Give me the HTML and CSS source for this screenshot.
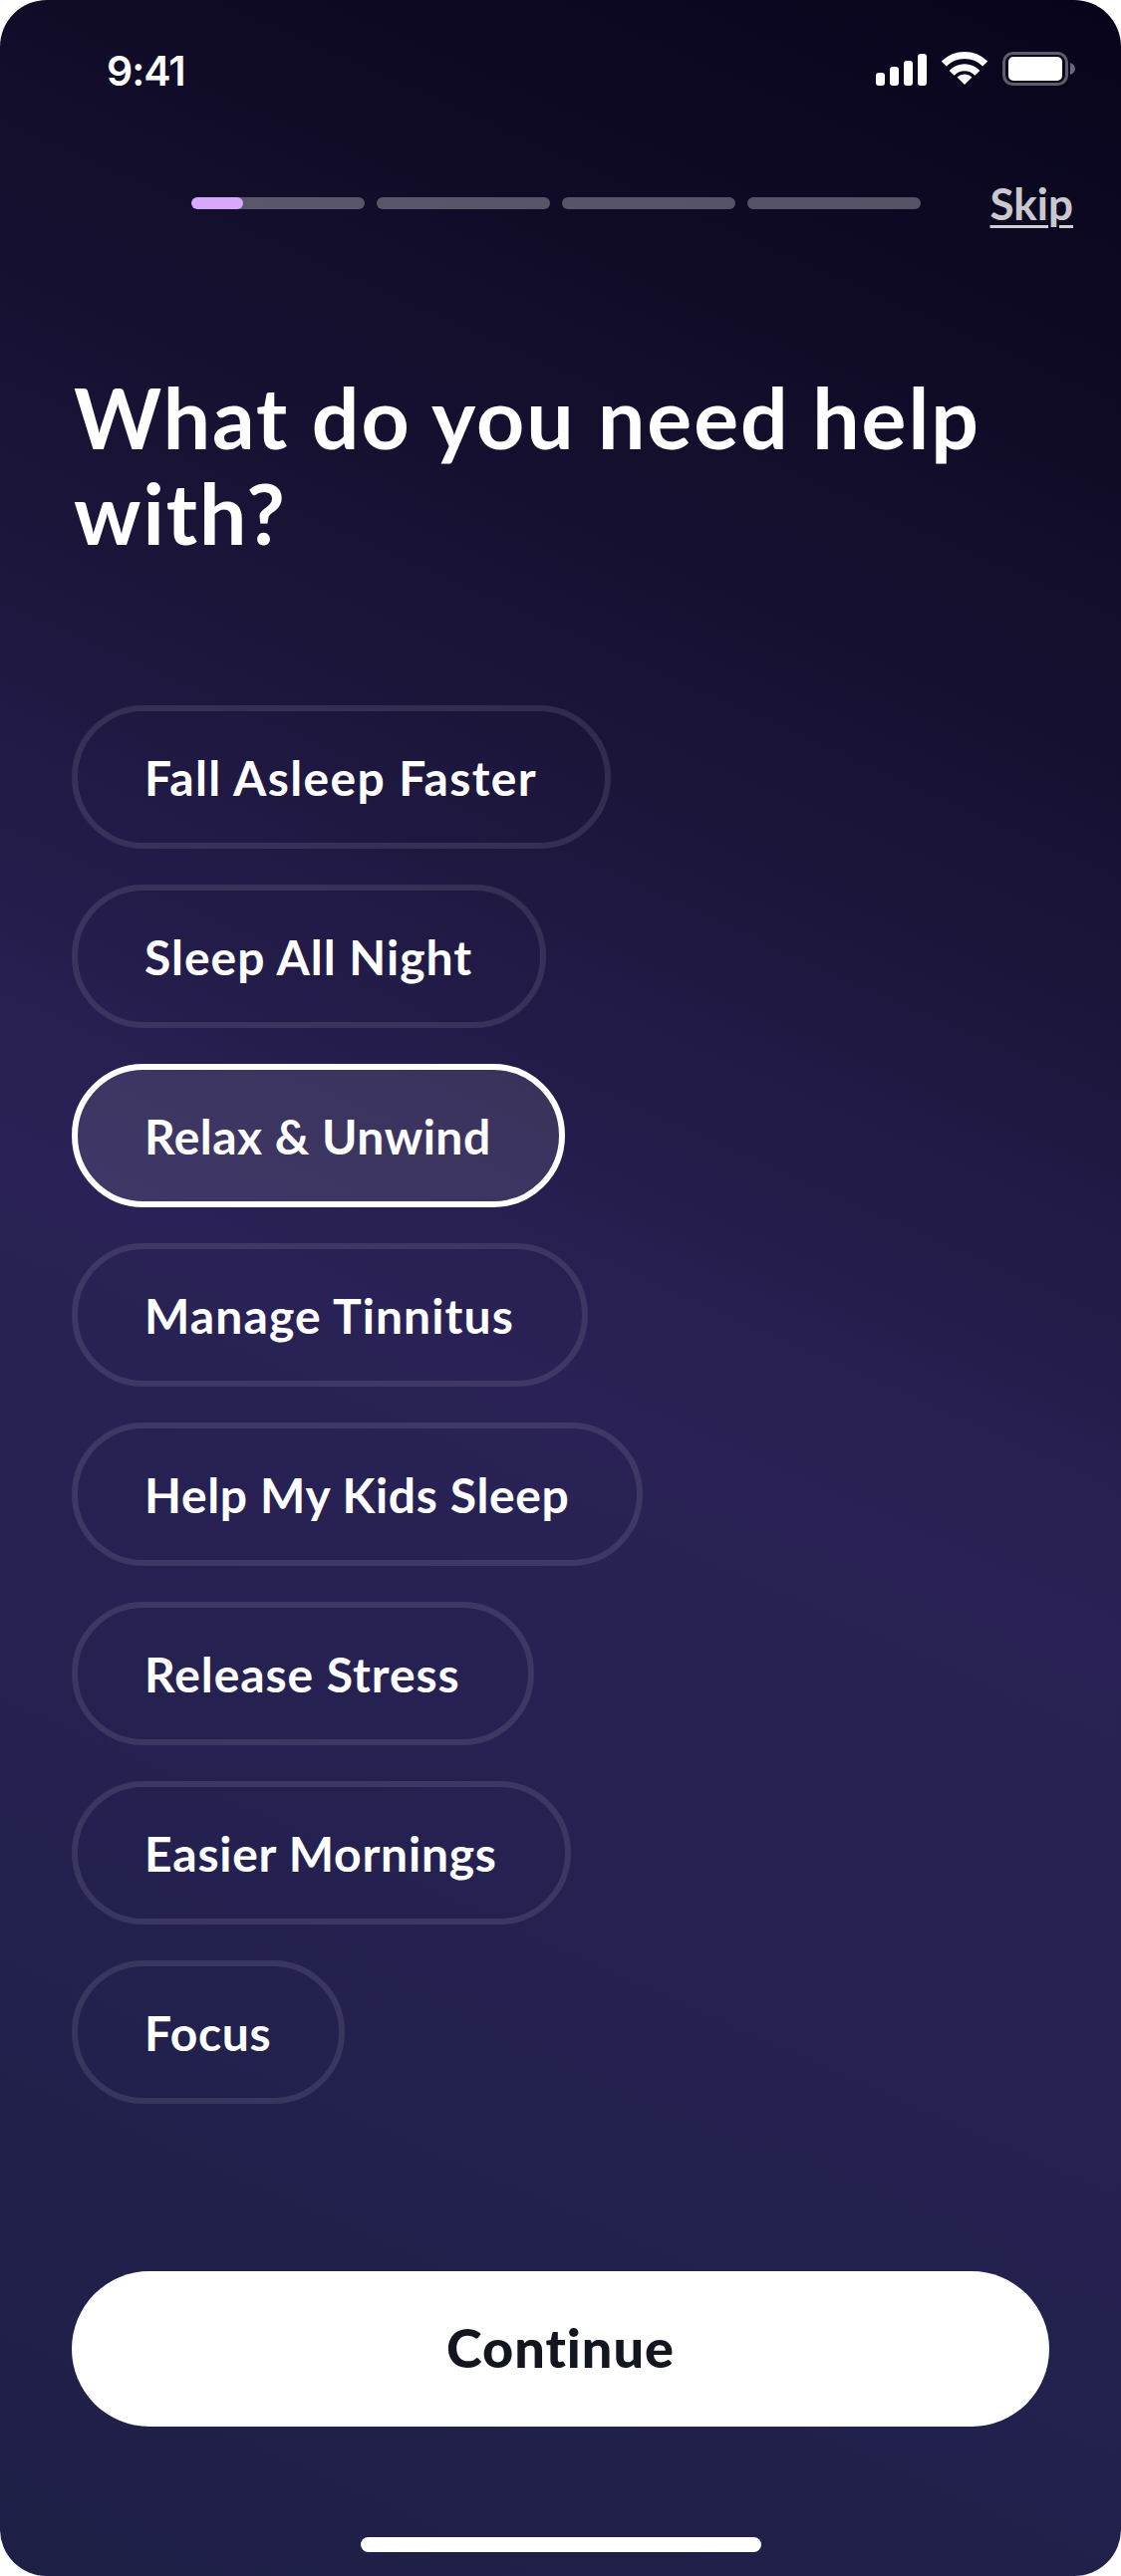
FILE: index.html
```
<!DOCTYPE html>
<html lang="en">
<head>
<meta charset="utf-8">
<title>What do you need help with?</title>
<link rel="stylesheet" href="styles.css">
</head>
<body>
<main class="screen">
  <header class="status-bar">
    <span class="time">9:41</span>
    <div class="status-icons">
      <svg class="signal" width="51" height="32" viewBox="0 0 51 32"><rect x="0" y="19" width="9" height="13" rx="3"/><rect x="14" y="13" width="9" height="19" rx="3"/><rect x="28" y="7" width="9" height="25" rx="3"/><rect x="42" y="0" width="9" height="32" rx="3"/></svg>
      <svg class="wifi" width="46" height="33" viewBox="0 0 46 33"><path class="wifi-arc" d="M2.3 12 A29.5 29.5 0 0 1 43.7 12"/><path class="wifi-arc" d="M10.2 21.4 A17.5 17.5 0 0 1 35.8 21.4"/><path d="M23 33 L15.5 25.5 A11 11 0 0 1 30.5 25.5 Z"/></svg>
      <svg class="battery" width="73" height="34" viewBox="0 0 73 34"><rect class="battery-case" x="1.5" y="1.5" width="63" height="31" rx="9"/><rect x="6" y="5" width="54" height="24" rx="5"/><path class="battery-nub" d="M68 11 C71 12 73 14 73 17 C73 20 71 22 68 23 Z"/></svg>
    </div>
  </header>

  <nav class="progress-row">
    <div class="progress">
      <div class="segment"><div class="segment-fill"></div></div>
      <div class="segment"></div>
      <div class="segment"></div>
      <div class="segment"></div>
    </div>
    <a class="skip">Skip</a>
  </nav>

  <h1 class="title">What do you need help with?</h1>

  <ul class="options">
    <li class="pill">Fall Asleep Faster</li>
    <li class="pill">Sleep All Night</li>
    <li class="pill pill-selected">Relax &amp; Unwind</li>
    <li class="pill">Manage Tinnitus</li>
    <li class="pill">Help My Kids Sleep</li>
    <li class="pill">Release Stress</li>
    <li class="pill">Easier Mornings</li>
    <li class="pill">Focus</li>
  </ul>

  <button class="continue">Continue</button>
  <div class="home-indicator"></div>
</main>
</body>
</html>
```
FILE: styles.css
```
* { box-sizing: border-box; }
html, body { margin: 0; padding: 0; background: #fff; }
body { width: 1125px; height: 2586px; overflow: hidden; }

.screen {
  width: 1125px;
  height: 2586px;
  border-radius: 47px;
  overflow: hidden;
  display: flex;
  flex-direction: column;
  color: #fff;
  font-family: "Lato", "Liberation Sans", sans-serif;
  font-variant-ligatures: none;
  background: linear-gradient(204deg, #07041b 0%, #15102f 24%, #2a2256 53%, #242150 72%, #1e1f45 100%);
}

.status-bar {
  height: 36px;
  margin-top: 52px;
  padding: 0 46px 0 107px;
  display: flex;
  justify-content: space-between;
  align-items: flex-start;
}
.time {
  font-family: "Inter", "Liberation Sans", sans-serif;
  font-size: 41px;
  font-weight: 600;
  letter-spacing: -1px;
  line-height: 38px;
}
.status-icons { display: flex; align-items: flex-start; gap: 15px; }
.signal { margin-top: 2px; fill: #fff; }
.wifi { fill: #fff; }
.wifi-arc { fill: none; stroke: #fff; stroke-width: 7; }
.battery { fill: #fff; }
.battery-case { fill: none; stroke: rgba(255, 255, 255, .35); stroke-width: 3; }
.battery-nub { fill: rgba(255, 255, 255, .4); }

.progress-row {
  margin-top: 92px;
  padding: 0 48px 0 192px;
  height: 48px;
  display: flex;
  align-items: center;
  justify-content: space-between;
}
.progress { display: flex; gap: 12px; }
.segment {
  width: 174px;
  height: 12px;
  border-radius: 6px;
  background: rgba(255, 255, 255, .3);
  overflow: hidden;
}
.segment-fill { width: 52px; height: 100%; border-radius: 6px; background: #d8a8ff; }
.skip {
  font-size: 44px;
  font-weight: 700;
  line-height: 48px;
  color: rgba(255, 255, 255, .8);
  text-decoration: underline;
  text-decoration-thickness: 3px;
  text-underline-offset: 5px;
}

.title {
  margin: 143px 48px 0 74px;
  font-size: 84px;
  font-weight: 700;
  line-height: 96px;
  letter-spacing: 2px;
}

.options {
  list-style: none;
  margin: 145px 0 0 72px;
  padding: 0;
  display: flex;
  flex-direction: column;
  align-items: flex-start;
  gap: 36px;
}
.pill {
  height: 144px;
  padding: 0 68px 0 67px;
  border: 6px solid rgba(255, 255, 255, .1);
  border-radius: 72px;
  display: flex;
  align-items: center;
  font-size: 48px;
  font-weight: 700;
  white-space: nowrap;
}
.pill:nth-child(1) { letter-spacing: 1.37px; }
.pill:nth-child(2) { letter-spacing: 1px; }
.pill:nth-child(3) { letter-spacing: .47px; }
.pill:nth-child(4) { letter-spacing: 1.1px; }
.pill:nth-child(5) { letter-spacing: .64px; }
.pill:nth-child(6) { letter-spacing: .94px; }
.pill:nth-child(7) { letter-spacing: .77px; }
.pill:nth-child(8) { letter-spacing: .66px; }
.pill-selected { border-color: #fff; background: rgba(255, 255, 255, .1); }

.continue {
  margin: auto 72px 0;
  height: 156px;
  padding: 0 0 3px;
  border: 0;
  border-radius: 78px;
  background: #fff;
  color: #12161f;
  font-family: inherit;
  font-size: 54px;
  font-weight: 900;
  letter-spacing: 1px;
}
.home-indicator {
  width: 402px;
  height: 15px;
  margin: 111px auto 24px;
  border-radius: 8px;
  background: #fff;
}
```
